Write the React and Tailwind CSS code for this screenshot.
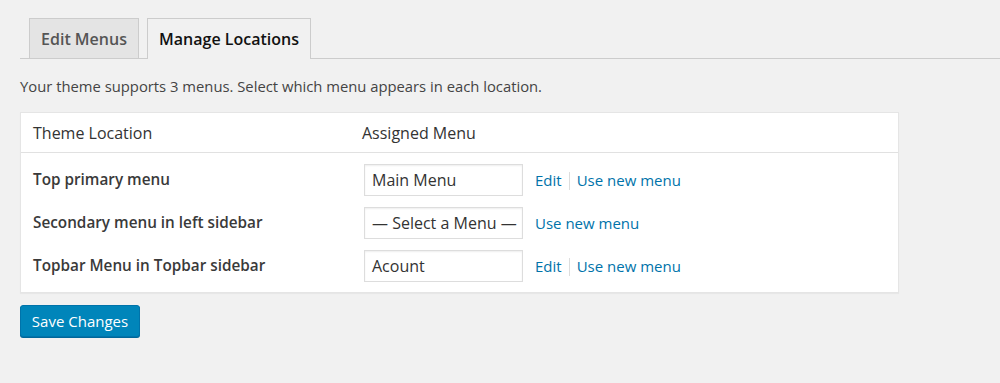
export default function App() {
  const rows = [
    { label: "Top primary menu", value: "Main Menu", edit: true },
    { label: "Secondary menu in left sidebar", value: "— Select a Menu —", edit: false },
    { label: "Topbar Menu in Topbar sidebar", value: "Acount", edit: true },
  ];
  return (
    <div className="w-[1000px] h-[383px] bg-[#f1f1f1] text-[#444] overflow-hidden" style={{ fontFamily: '"Open Sans", sans-serif' }}>
      <div className="pl-[20px] pt-[18px]">
        <div className="flex items-end border-b border-[#ccc] h-[41px] pl-[9px] gap-[8px]">
          <div className="h-[40px] w-[110px] flex items-center justify-center bg-[#e4e4e4] border border-b-0 border-[#ccc] text-[16px] font-semibold text-[#555]">
            Edit Menus
          </div>
          <div className="h-[41px] w-[164px] -mb-px flex items-center justify-center bg-[#f1f1f1] border border-b-0 border-[#ccc] text-[16px] font-semibold text-[#111]">
            Manage Locations
          </div>
        </div>
        <p className="mt-[17px] text-[14.8px] leading-[20px] text-[#444]">
          Your theme supports 3 menus. Select which menu appears in each location.
        </p>
        <div className="mt-[16px] w-[879px] h-[181px] bg-white border border-[#e5e5e5] shadow-[0_1px_1px_rgba(0,0,0,0.04)]">
          <div className="flex items-center h-[40px] border-b border-[#e1e1e1] text-[16px] text-[#333]">
            <div className="w-[341px] pl-[12px]">Theme Location</div>
            <div>Assigned Menu</div>
          </div>
          <div className="pt-[5px]">
            {rows.map((r) => (
              <div key={r.label} className="flex items-center h-[43px]">
                <div className="w-[343px] pl-[12px] text-[15.3px] font-semibold text-[#3a3a3a]">{r.label}</div>
                <div className="w-[159px] h-[32px] border border-[#ddd] bg-white flex items-center pl-[7px] text-[16px] text-[#333] shadow-[inset_0_1px_2px_rgba(0,0,0,0.07)] whitespace-nowrap overflow-hidden">
                  {r.value}
                </div>
                <div className="ml-[12px] flex items-center text-[15px] text-[#0073aa] pt-[2px]">
                  {r.edit && (
                    <>
                      <span>Edit</span>
                      <span className="mx-[7px] w-px h-[18px] bg-[#ddd]" />
                    </>
                  )}
                  <span>Use new menu</span>
                </div>
              </div>
            ))}
          </div>
        </div>
        <button className="mt-[12px] w-[120px] h-[32px] rounded-[3px] bg-[#0085ba] border border-[#0073aa] text-white text-[15px] shadow-[0_1px_0_#006799]" style={{ fontFamily: '"Open Sans", sans-serif' }}>
          Save Changes
        </button>
      </div>
    </div>
  );
}
